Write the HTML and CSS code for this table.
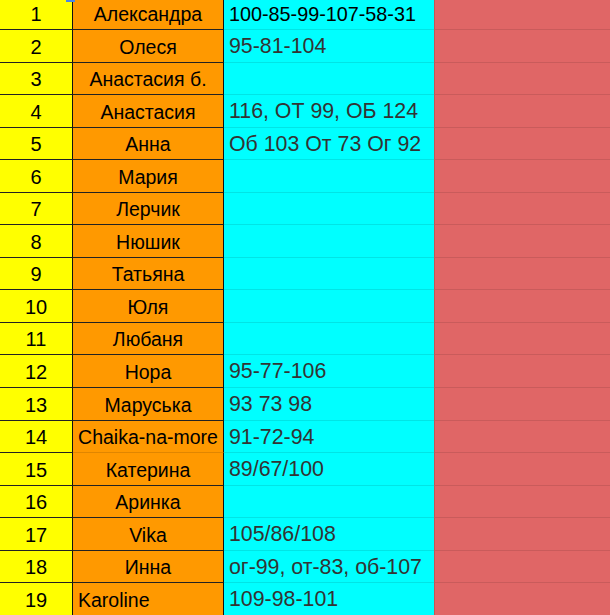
FILE: index.html
```html
<!DOCTYPE html>
<html lang="ru">
<head>
<meta charset="utf-8">
<title>Таблица</title>
<link rel="stylesheet" href="styles.css">
</head>
<body>
<div class="sheet">
  <div class="handle"></div>
  <div class="c num">1</div><div class="c name">Александра</div><div class="c data first">100-85-99-107-58-31</div><div class="c red"></div>
  <div class="c num">2</div><div class="c name">Олеся</div><div class="c data">95-81-104</div><div class="c red"></div>
  <div class="c num">3</div><div class="c name">Анастасия б.</div><div class="c data"></div><div class="c red"></div>
  <div class="c num">4</div><div class="c name">Анастасия</div><div class="c data">116, ОТ 99, ОБ 124</div><div class="c red"></div>
  <div class="c num">5</div><div class="c name">Анна</div><div class="c data">Об 103 От 73 Ог 92</div><div class="c red"></div>
  <div class="c num">6</div><div class="c name">Мария</div><div class="c data"></div><div class="c red"></div>
  <div class="c num">7</div><div class="c name">Лерчик</div><div class="c data"></div><div class="c red"></div>
  <div class="c num">8</div><div class="c name">Нюшик</div><div class="c data"></div><div class="c red"></div>
  <div class="c num">9</div><div class="c name">Татьяна</div><div class="c data"></div><div class="c red"></div>
  <div class="c num">10</div><div class="c name">Юля</div><div class="c data"></div><div class="c red"></div>
  <div class="c num">11</div><div class="c name">Любаня</div><div class="c data"></div><div class="c red"></div>
  <div class="c num">12</div><div class="c name">Нора</div><div class="c data">95-77-106</div><div class="c red"></div>
  <div class="c num">13</div><div class="c name">Маруська</div><div class="c data">93 73 98</div><div class="c red"></div>
  <div class="c num">14</div><div class="c name soft">Chaika-na-more</div><div class="c data">91-72-94</div><div class="c red"></div>
  <div class="c num">15</div><div class="c name">Катерина</div><div class="c data">89/67/100</div><div class="c red"></div>
  <div class="c num">16</div><div class="c name">Аринка</div><div class="c data"></div><div class="c red"></div>
  <div class="c num">17</div><div class="c name">Vika</div><div class="c data">105/86/108</div><div class="c red"></div>
  <div class="c num">18</div><div class="c name">Инна</div><div class="c data">ог-99, от-83, об-107</div><div class="c red"></div>
  <div class="c num">19</div><div class="c name left">Karoline</div><div class="c data">109-98-101</div><div class="c red"></div>
</div>
</body>
</html>
```

FILE: styles.css
```css
html, body {
  margin: 0;
  padding: 0;
  background: #ffffff;
  overflow: hidden;
}

.sheet {
  position: relative;
  display: grid;
  grid-template-columns: 73px 151px 210px 176px;
  grid-auto-rows: 32.56px;
  margin-top: -2.6px;
  font-family: "Liberation Sans", Arial, sans-serif;
  font-size: 20px;
  line-height: 20px;
}

.c {
  box-sizing: border-box;
  display: flex;
  align-items: flex-end;
  padding: 0 4px 5px 4px;
  white-space: nowrap;
  overflow: hidden;
  border-bottom: 1px solid rgba(0, 0, 0, 0.1);
}

.num {
  background: #ffff00;
  color: #000;
  justify-content: center;
  border-right: 1px solid #111;
  border-bottom: 1px solid #222;
}

.name {
  background: #ff9900;
  color: #000;
  font-size: 19.5px;
  justify-content: center;
  padding-left: 0;
  padding-right: 0;
  border-right: 1px solid #111;
  border-bottom: 1px solid #222;
}

.name.soft {
  border-bottom-color: rgba(0, 0, 0, 0.12);
}

.name.left {
  justify-content: flex-start;
  padding-left: 5px;
}

.data {
  background: #00ffff;
  color: #333;
  font-size: 21.33px;
  padding-left: 5px;
  padding-bottom: 5.5px;
}

.data.first {
  color: #000;
  font-size: 19.8px;
  padding-bottom: 5px;
}

.red {
  background: #e06666;
  border-left: 1px solid #c45555;
}

.handle {
  position: absolute;
  left: 66px;
  top: 2.6px;
  width: 9px;
  height: 2px;
  background: #4a86e8;
  z-index: 2;
}
```
